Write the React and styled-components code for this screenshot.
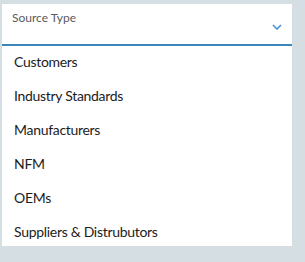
import React from 'react';
import styled, { createGlobalStyle } from 'styled-components';

const GlobalStyle = createGlobalStyle`
  html, body {
    margin: 0;
    padding: 0;
    background: #d4dee3;
  }
  body {
    font-family: Lato, "Liberation Sans", sans-serif;
  }
`;

const Page = styled.div`
  width: 305px;
  height: 262px;
  padding: 4px 13px 0 2px;
  box-sizing: border-box;
`;

const Field = styled.div`
  position: relative;
  background: #ffffff;
  height: 40px;
  border-bottom: 2px solid #3a86b9;
  box-sizing: content-box;
`;

const Label = styled.div`
  position: absolute;
  left: 10px;
  top: 6px;
  font-size: 12px;
  color: #5a5a5a;
`;

const Chevron = styled.svg`
  position: absolute;
  right: 10px;
  top: 20px;
`;

const Menu = styled.ul`
  list-style: none;
  margin: 0;
  padding: 0;
  max-height: 200px;
  overflow: hidden;
  background: #ffffff;
`;

const Item = styled.li`
  height: 34px;
  line-height: 32px;
  padding-left: 12px;
  font-size: 14px;
  letter-spacing: -0.3px;
  color: #1c1c1c;
`;

const options = [
  'Customers',
  'Industry Standards',
  'Manufacturers',
  'NFM',
  'OEMs',
  'Suppliers & Distrubutors',
];

export default function App() {
  return (
    <>
      <GlobalStyle />
      <Page>
        <Field>
          <Label>Source Type</Label>
          <Chevron width="10" height="6" viewBox="0 0 10 6">
            <path d="M1 1l4 4 4-4" fill="none" stroke="#4a8fd6" strokeWidth="1.6" />
          </Chevron>
        </Field>
        <Menu>
          {options.map((o) => (
            <Item key={o}>{o}</Item>
          ))}
        </Menu>
      </Page>
    </>
  );
}
